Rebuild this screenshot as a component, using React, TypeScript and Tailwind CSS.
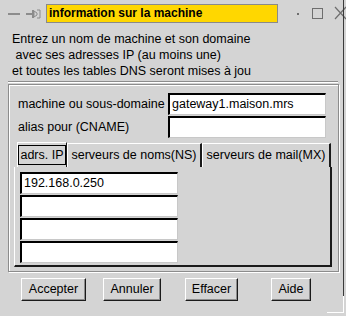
import React from 'react';

const Field = ({ value = '', className = '' }: { value?: string; className?: string }) => (
  <div
    className={`h-[22px] bg-white border-t-2 border-l-2 border-t-black border-l-black border-b border-r border-b-[#c8c8c8] border-r-[#c8c8c8] pl-[2px] text-[12.5px] leading-[18px] text-black whitespace-nowrap ${className}`}
  >
    {value}
  </div>
);

const Button = ({ label, className = '' }: { label: string; className?: string }) => (
  <div
    className={`h-[23px] flex items-center justify-center border border-t-white border-l-white border-b-[#1a1a1a] border-r-[#1a1a1a] shadow-[inset_-1px_-1px_0_#8c8c8c] text-[12.5px] text-black whitespace-nowrap ${className}`}
  >
    {label}
  </div>
);

export default function App() {
  return (
    <div
      className="relative w-[346px] h-[316px] overflow-hidden bg-[#d4d4d4] text-black"
      style={{ fontFamily: '"Liberation Sans", Arial, sans-serif' }}
    >
      {/* barre de titre */}
      <div className="flex items-center h-[25px] pt-[1px]">
        <svg width="46" height="25" viewBox="0 0 46 25" className="shrink-0">
          <rect x="8" y="12" width="12" height="2" fill="#8c8c8c" />
          <rect x="26" y="12" width="6" height="2" fill="#8c8c8c" />
          <rect x="32" y="9" width="2" height="8" fill="#8c8c8c" />
          <path d="M34 10 L37 12 L37 14 L34 16 Z M37 9 L40 9 L40 17 L37 17" fill="none" stroke="#8c8c8c" strokeWidth="1" />
        </svg>
        <div className="w-[232px] h-[19px] bg-[#ffd700] border border-[#8a8a8a] flex items-center pl-[2px] text-[12px] font-bold leading-none whitespace-nowrap">
          information sur la machine
        </div>
        <svg width="68" height="25" viewBox="0 0 68 25" className="shrink-0">
          <rect x="19" y="12" width="2" height="2" fill="#6e6e6e" />
          <rect x="34.5" y="7.5" width="10" height="10" fill="none" stroke="#6e6e6e" strokeWidth="1" />
          <path d="M57 6 L68 18 M68 6 L57 18" stroke="#6e6e6e" strokeWidth="1.2" />
        </svg>
      </div>

      {/* description */}
      <div className="pl-[12px] pt-[6px] text-[12.5px] leading-[16px] whitespace-pre">
        <div>Entrez un nom de machine et son domaine</div>
        <div> avec ses adresses IP (au moins une)</div>
        <div>et toutes les tables DNS seront mises à jou</div>
      </div>

      <div className="mx-[8px] mt-[2px] h-[2px] border-t border-[#8c8c8c] border-b border-b-white" />

      {/* cadre principal */}
      <div className="ml-[8px] mr-[7px] mt-[1px] h-[188px] border border-[#8c8c8c] shadow-[inset_1px_1px_0_#fff,1px_1px_0_#fff] px-[5px] pt-[8px]">
        <div className="flex items-center h-[22px]">
          <div className="w-[154px] pl-[4px] text-[12.5px] whitespace-nowrap">machine ou sous-domaine</div>
          <Field value="gateway1.maison.mrs" className="w-[158px]" />
        </div>
        <div className="flex items-center h-[22px] mt-[1px]">
          <div className="w-[154px] pl-[4px] text-[12.5px] whitespace-nowrap">alias pour (CNAME)</div>
          <Field className="w-[158px]" />
        </div>

        {/* onglets */}
        <div className="flex mt-[4px] ml-[3px] h-[25px] items-end">
          <div className="w-[50px] h-[25px] border-t border-l border-white border-r border-r-[#1a1a1a] flex items-center justify-center">
            <span className="border border-black px-[1px] leading-[18px] text-[12.5px] whitespace-nowrap">adrs. IP</span>
          </div>
          <div className="w-[135px] h-[24px] border-t border-l border-white border-r-2 border-r-[#1a1a1a] flex items-center justify-center text-[12.5px] whitespace-nowrap">
            serveurs de noms(NS)
          </div>
          <div className="w-[129px] h-[24px] border-t border-l border-white border-r-2 border-r-[#1a1a1a] flex items-center justify-center text-[12.5px] whitespace-nowrap">
            serveurs de mail(MX)
          </div>
        </div>
        <div className="w-[318px] h-[100px] border-l border-white border-r-2 border-b-2 border-r-[#1a1a1a] border-b-[#1a1a1a] pl-[5px] pt-[5px] flex flex-col gap-[1px]">
          <Field value="192.168.0.250" className="w-[158px]" />
          <Field className="w-[158px]" />
          <Field className="w-[158px]" />
          <Field className="w-[158px]" />
        </div>
      </div>

      {/* boutons */}
      <div className="relative h-[30px] mt-[6px]">
        <Button label="Accepter" className="absolute left-[21px] w-[65px]" />
        <Button label="Annuler" className="absolute left-[103px] w-[58px]" />
        <Button label="Effacer" className="absolute left-[185px] w-[53px]" />
        <Button label="Aide" className="absolute left-[271px] w-[40px]" />
      </div>

      {/* bord droit et poignée */}
      <div className="absolute right-[2px] top-0 h-[296px] w-px bg-[#3a3a3a]" />
      <div className="absolute right-[2px] bottom-[3px] h-[17px] w-[17px] border-r border-b border-white" />
    </div>
  );
}
